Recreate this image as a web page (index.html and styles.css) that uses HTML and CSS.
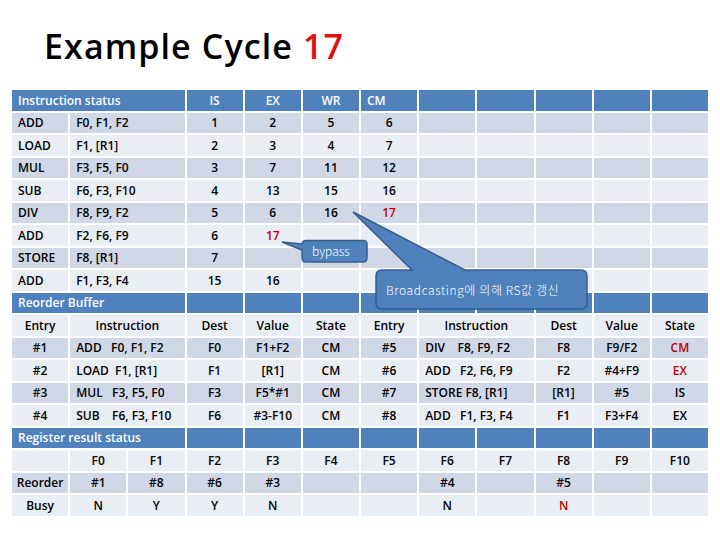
FILE: index.html
```html
<!DOCTYPE html>
<html>
<head>
<meta charset="utf-8">
<link rel="stylesheet" href="styles.css">
</head>
<body>
<div class="page">
  <h1 class="title">Example Cycle <span class="title-red">17</span></h1>
  <div class="table">
    <div class="row hd">
      <div class="s3 left">Instruction status</div><div>IS</div><div>EX</div><div>WR</div><div class="left">CM</div><div></div><div></div><div></div><div></div><div></div>
    </div>
    <div class="row dk">
      <div class="left">ADD</div><div class="s2 left">F0, F1, F2</div><div>1</div><div>2</div><div>5</div><div>6</div><div></div><div></div><div></div><div></div><div></div>
    </div>
    <div class="row lt">
      <div class="left">LOAD</div><div class="s2 left">F1, [R1]</div><div>2</div><div>3</div><div>4</div><div>7</div><div></div><div></div><div></div><div></div><div></div>
    </div>
    <div class="row dk">
      <div class="left">MUL</div><div class="s2 left">F3, F5, F0</div><div>3</div><div>7</div><div>11</div><div>12</div><div></div><div></div><div></div><div></div><div></div>
    </div>
    <div class="row lt">
      <div class="left">SUB</div><div class="s2 left">F6, F3, F10</div><div>4</div><div>13</div><div>15</div><div>16</div><div></div><div></div><div></div><div></div><div></div>
    </div>
    <div class="row dk">
      <div class="left">DIV</div><div class="s2 left">F8, F9, F2</div><div>5</div><div>6</div><div>16</div><div class="red">17</div><div></div><div></div><div></div><div></div><div></div>
    </div>
    <div class="row lt">
      <div class="left">ADD</div><div class="s2 left">F2, F6, F9</div><div>6</div><div class="red">17</div><div></div><div></div><div></div><div></div><div></div><div></div><div></div>
    </div>
    <div class="row dk">
      <div class="left">STORE</div><div class="s2 left">F8, [R1]</div><div>7</div><div></div><div></div><div></div><div></div><div></div><div></div><div></div><div></div>
    </div>
    <div class="row lt">
      <div class="left">ADD</div><div class="s2 left">F1, F3, F4</div><div>15</div><div>16</div><div></div><div></div><div></div><div></div><div></div><div></div><div></div>
    </div>
    <div class="row hd">
      <div class="s3 left">Reorder Buffer</div><div></div><div></div><div></div><div></div><div></div><div></div><div></div><div></div><div></div>
    </div>
    <div class="row lt">
      <div>Entry</div><div class="s2">Instruction</div><div>Dest</div><div>Value</div><div>State</div><div>Entry</div><div class="s2">Instruction</div><div>Dest</div><div>Value</div><div>State</div>
    </div>
    <div class="row dk">
      <div>#1</div><div class="s2 left pre">ADD   F0, F1, F2</div><div>F0</div><div>F1+F2</div><div>CM</div><div>#5</div><div class="s2 left pre">DIV    F8, F9, F2</div><div>F8</div><div>F9/F2</div><div class="red">CM</div>
    </div>
    <div class="row lt">
      <div>#2</div><div class="s2 left pre">LOAD  F1, [R1]</div><div>F1</div><div>[R1]</div><div>CM</div><div>#6</div><div class="s2 left pre">ADD   F2, F6, F9</div><div>F2</div><div>#4+F9</div><div class="red">EX</div>
    </div>
    <div class="row dk">
      <div>#3</div><div class="s2 left pre">MUL   F3, F5, F0</div><div>F3</div><div>F5*#1</div><div>CM</div><div>#7</div><div class="s2 left pre">STORE F8, [R1]</div><div>[R1]</div><div>#5</div><div>IS</div>
    </div>
    <div class="row lt">
      <div>#4</div><div class="s2 left pre">SUB    F6, F3, F10</div><div>F6</div><div>#3-F10</div><div>CM</div><div>#8</div><div class="s2 left pre">ADD   F1, F3, F4</div><div>F1</div><div>F3+F4</div><div>EX</div>
    </div>
    <div class="row hd">
      <div class="s3 left">Register result status</div><div></div><div></div><div></div><div></div><div></div><div></div><div></div><div></div><div></div>
    </div>
    <div class="row lt">
      <div></div><div>F0</div><div>F1</div><div>F2</div><div>F3</div><div>F4</div><div>F5</div><div>F6</div><div>F7</div><div>F8</div><div>F9</div><div>F10</div>
    </div>
    <div class="row dk">
      <div>Reorder</div><div>#1</div><div>#8</div><div>#6</div><div>#3</div><div></div><div></div><div>#4</div><div></div><div>#5</div><div></div><div></div>
    </div>
    <div class="row lt">
      <div>Busy</div><div>N</div><div>Y</div><div>Y</div><div>N</div><div></div><div></div><div>N</div><div></div><div class="red">N</div><div></div><div></div>
    </div>
  </div>

  <svg class="callouts" width="720" height="540" viewBox="0 0 720 540">
    <path d="M306,240.5 H363 Q367,240.5 367,244.5 V258 Q367,262 363,262 H306 Q302,262 302,258 V250 L282,242 L302,244 Q302.5,240.5 306,240.5 Z" fill="#4f81bd" stroke="#385d8a" stroke-width="1.5"/>
    <path d="M382,270 H412 L353,212 L465,270 H581 Q587,270 587,276 V303 Q587,309 581,309 H382 Q376,309 376,303 V276 Q376,270 382,270 Z" fill="#4f81bd" stroke="#385d8a" stroke-width="1.5"/>
  </svg>
  <div class="label label-bypass">bypass</div>
  <div class="label label-bcast">Broadcasting에 의해 RS값 갱신</div>
</div>
</body>
</html>
```

FILE: styles.css
```css
* { box-sizing: border-box; }
html, body { margin: 0; padding: 0; background: #ffffff; }
.page {
  position: relative;
  width: 720px;
  height: 540px;
  font-family: "Open Sans", "Noto Sans CJK KR", sans-serif;
}
.title {
  margin: 0;
  padding: 29px 0 0 44px;
  height: 90px;
  font-size: 34px;
  line-height: 34px;
  font-weight: 600;
  letter-spacing: 1.1px;
  color: #000;
}
.title-red { color: #e01010; }
.table {
  margin-left: 12px;
  width: 696px;
  display: flex;
  flex-direction: column;
  gap: 2px;
}
.row {
  display: grid;
  grid-template-columns: repeat(12, 1fr);
  column-gap: 2px;
  height: 20.5px;
}
.row > div {
  display: flex;
  align-items: center;
  justify-content: center;
  font-size: 12px;
  font-weight: 600;
  color: #000;
  white-space: nowrap;
}
.row.hd > div { background: #4f81bd; color: #fff; }
.row.dk > div { background: #d0d8e8; }
.row.lt > div { background: #e9edf4; }
.row > .left { justify-content: flex-start; padding-left: 6px; }
.row > .s2 { grid-column: span 2; }
.row > .s3 { grid-column: span 3; }
.row > .pre { white-space: pre; }
.row > .red { color: #c00000; }
.callouts {
  position: absolute;
  left: 0;
  top: 0;
  pointer-events: none;
}
.label {
  position: absolute;
  color: #fff;
  font-family: "Noto Sans CJK KR", "Noto Sans", sans-serif;
  font-size: 12px;
  font-weight: 300;
  white-space: nowrap;
}
.label-bypass { left: 312px; top: 242px; line-height: 18px; }
.label-bcast { left: 386px; top: 280px; line-height: 20px; letter-spacing: 0.6px; }
```
